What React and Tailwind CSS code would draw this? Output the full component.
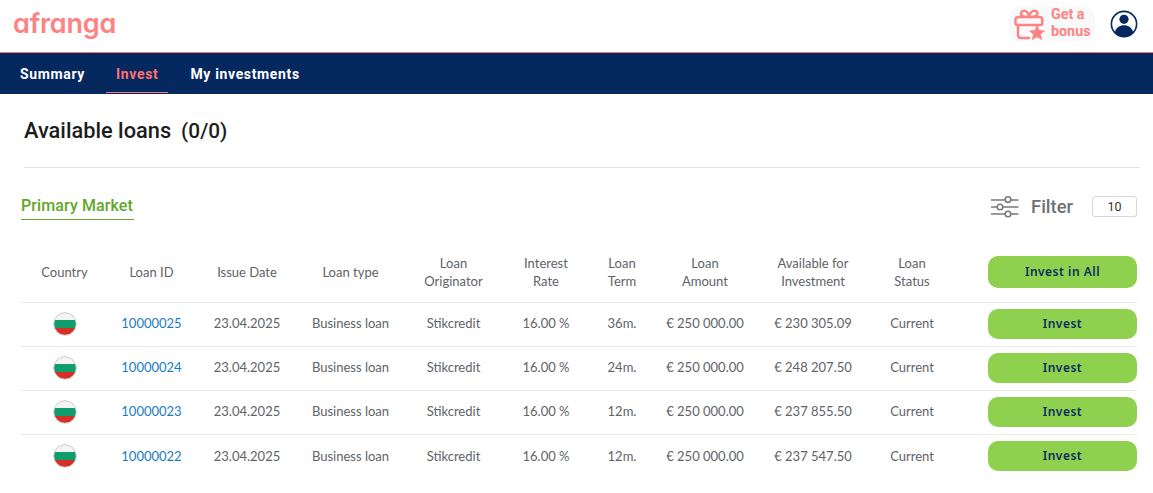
const rows = [
  ["10000025", "36m.", "€ 230 305.09"],
  ["10000024", "24m.", "€ 248 207.50"],
  ["10000023", "12m.", "€ 237 855.50"],
  ["10000022", "12m.", "€ 237 547.50"],
];

const cols = [
  { w: "w-[87px]", label: ["Country"] },
  { w: "w-[87px]", label: ["Loan ID"] },
  { w: "w-[104px]", label: ["Issue Date"] },
  { w: "w-[103px]", label: ["Loan type"] },
  { w: "w-[103px]", label: ["Loan", "Originator"] },
  { w: "w-[82px]", label: ["Interest", "Rate"] },
  { w: "w-[70px]", label: ["Loan", "Term"] },
  { w: "w-[96px]", label: ["Loan", "Amount"] },
  { w: "w-[120px]", label: ["Available for", "Investment"] },
  { w: "w-[78px]", label: ["Loan", "Status"] },
  { w: "w-[186px]", label: [] },
];

function Flag() {
  return (
    <svg width="24" height="24" viewBox="0 0 24 24" className="mx-auto block">
      <defs>
        <clipPath id="flagclip"><circle cx="12" cy="12" r="11" /></clipPath>
      </defs>
      <g clipPath="url(#flagclip)">
        <rect x="0" y="0" width="24" height="8" fill="#f4f4f4" />
        <rect x="0" y="8" width="24" height="8" fill="#0f9d6b" />
        <rect x="0" y="16" width="24" height="8" fill="#d62f27" />
      </g>
      <circle cx="12" cy="12" r="11.3" fill="none" stroke="#c9c9c9" strokeWidth="1" />
    </svg>
  );
}

function Gift() {
  return (
    <svg width="32" height="32" viewBox="0 0 32 32" fill="none" stroke="#ff8282" strokeWidth="2.4" strokeLinecap="round" strokeLinejoin="round">
      <path d="M16 9 C13 9 8 9 8 5.5 C8 2.5 12 2 14 4 C15.5 5.5 16 7.5 16 9 C16 7.5 17 5.5 18.5 4 C20.5 2 24.5 2.5 24.5 5.5 C24.5 9 19 9 16 9Z" />
      <path d="M6 9 H26.5 C28.5 9 29.3 10 29.3 12 V15.5 C29.3 16.5 28.8 17 27.5 17 H4.5 C3 17 2.5 16.5 2.5 15.5 V12 C2.5 10 3.5 9 6 9Z" />
      <path d="M5 17 V27 C5 29 6.5 30 8 30 H16" />
      <path d="M24 17.5 L26 22.5 L31.5 23 L27.3 26.3 L28.7 31.5 L24 28.7 L19.3 31.5 L20.7 26.3 L16.5 23 L22 22.5 Z" fill="#ff8282" stroke="#ff8282" strokeWidth="0.8" />
    </svg>
  );
}

function User() {
  return (
    <svg width="28" height="28" viewBox="0 0 28 28">
      <circle cx="14" cy="14" r="12.6" fill="#fff" stroke="#05285f" strokeWidth="1.6" />
      <circle cx="14" cy="9.3" r="4.6" fill="#05285f" />
      <path d="M4.8 22.5 C6 17.5 9.5 15.2 14 15.2 C18.5 15.2 22 17.5 23.2 22.5 C21 25 17.8 26.4 14 26.4 C10.2 26.4 7 25 4.8 22.5Z" fill="#05285f" />
    </svg>
  );
}

function Sliders() {
  return (
    <svg width="28" height="22" viewBox="0 0 28 22" fill="none" stroke="#777a7e" strokeWidth="1.6">
      <path d="M0 4 H14 M20 4 H27.5" />
      <circle cx="17" cy="3.6" r="2.8" />
      <path d="M0 11 H6 M12 11 H27.5" />
      <circle cx="9" cy="11" r="2.8" />
      <path d="M0 18 H14 M20 18 H27.5" />
      <circle cx="17" cy="18" r="2.8" />
    </svg>
  );
}

export default function App() {
  return (
    <div className="min-h-[493px] bg-white text-[#606367] font-['Lato','Noto_Sans',sans-serif] overflow-hidden">
      <header className="h-[53px] border-b border-[#ff6f6f] flex items-center justify-between pl-[13px] pr-[15px]">
        <span className="font-['Inter',sans-serif] [font-feature-settings:'cv11'] text-[27px] leading-none font-semibold tracking-[-0.2px] text-[#ff8282] -mt-[6px]">afranga</span>
        <div className="flex items-center gap-[15px] -mt-[5px]">
          <div className="flex items-center gap-[6px] h-[34px] w-[86px] pl-[4px] rounded-[10px] bg-[#f8f9fb]">
            <Gift />
            <div className="font-['Roboto',sans-serif] font-bold text-[14.3px] leading-[17px] text-[#ff8282] -mt-[2px]">Get a<br />bonus</div>
          </div>
          <User />
        </div>
      </header>

      <nav className="h-[41px] bg-[#05285f] flex pl-[10px] font-['Roboto',sans-serif] font-bold text-[14px] tracking-[0.65px] text-white">
        <span className="px-[10px] h-[40px] pt-[3px] flex items-center border-b border-transparent">Summary</span>
        <span className="ml-[11px] px-[10px] h-[40px] pt-[3px] flex items-center text-[#ff7272] border-b border-[#ff7272]">Invest</span>
        <span className="ml-[12px] px-[10px] h-[40px] pt-[3px] flex items-center border-b border-transparent">My investments</span>
      </nav>

      <main className="pl-[21px] pr-[16px]">
        <div className="ml-[3px] mr-[-3px] pt-[24px] pb-[23px] border-b border-[#e3e3e3] flex font-['Roboto',sans-serif] font-medium text-[21.8px] leading-[26px] text-[#1d1d1d]">
          <h1 className="font-medium">Available loans</h1>
          <span className="ml-[10px] text-[20.8px]">(0/0)</span>
        </div>

        <div className="flex items-center justify-between pt-[5px] h-[77px]">
          <span className="font-['Roboto',sans-serif] font-medium text-[16px] leading-[19px] text-[#62a729] border-b border-[#62a729] pb-[4px] pr-[1px] tracking-[0.1px] mt-[-3px]">Primary Market</span>
          <div className="flex items-center mt-[-4px]">
            <Sliders />
            <span className="font-['Roboto',sans-serif] font-medium text-[18.4px] text-[#6f7276] ml-[12px]">Filter</span>
            <span className="ml-[19px] w-[45px] h-[21px] rounded-[3px] border border-[#d5d8dc] flex items-center justify-center font-['Roboto',sans-serif] text-[12.5px] text-[#333]">10</span>
          </div>
        </div>

        <table className="table-fixed w-[1116px] border-collapse text-[13px]">
          <thead>
            <tr className="h-[57px] border-b border-[#e8e8e8]">
              {cols.map((c, i) => (
                <th key={i} className={`${c.w} font-normal text-center leading-[18px] text-[#606367] align-middle pb-[3px]`}>
                  {c.label.length > 0 ? (
                    c.label.map((l) => <div key={l}>{l}</div>)
                  ) : (
                    <button className="block ml-auto w-[149px] h-[32px] rounded-[10px] bg-[#8fd14f] font-['Noto_Sans',sans-serif] font-semibold text-[12px] tracking-[0.5px] text-[#0c2c5e]">Invest in All</button>
                  )}
                </th>
              ))}
            </tr>
          </thead>
          <tbody>
            {rows.map(([id, term, avail]) => (
              <tr key={id} className="h-[44px] border-b border-[#e8e8e8] last:border-b-0 text-center">
                <td><Flag /></td>
                <td className="text-[#1a7cc1]">{id}</td>
                <td>23.04.2025</td>
                <td>Business loan</td>
                <td>Stikcredit</td>
                <td>16.00 %</td>
                <td>{term}</td>
                <td>€ 250 000.00</td>
                <td>{avail}</td>
                <td>Current</td>
                <td>
                  <button className="block ml-auto w-[149px] h-[30px] rounded-[10px] bg-[#8fd14f] font-['Noto_Sans',sans-serif] font-semibold text-[12px] tracking-[0.5px] text-[#0c2c5e]">Invest</button>
                </td>
              </tr>
            ))}
          </tbody>
        </table>
      </main>
    </div>
  );
}
